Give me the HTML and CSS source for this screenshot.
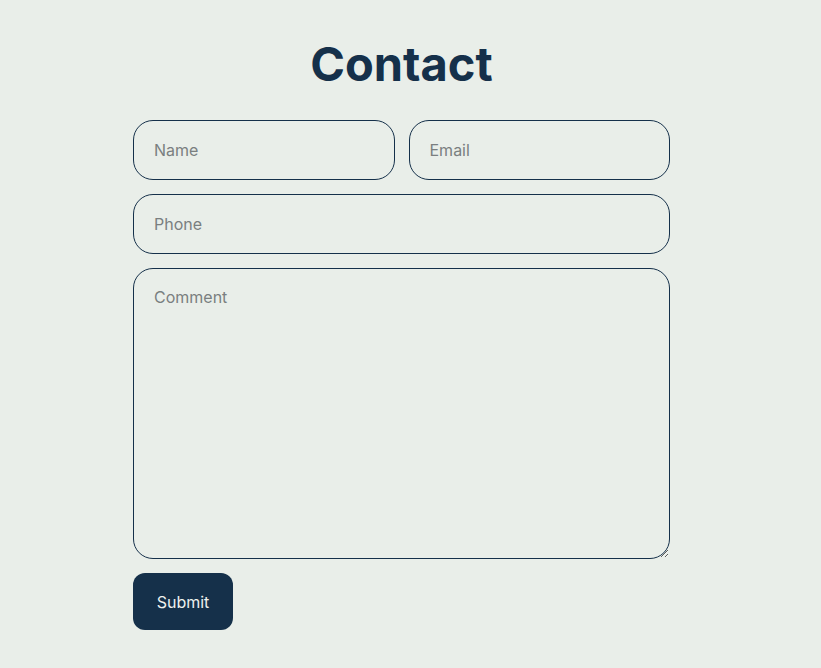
FILE: index.html
```html
<!DOCTYPE html>
<html lang="en">
<head>
<meta charset="utf-8">
<title>Contact</title>
<link rel="stylesheet" href="styles.css">
</head>
<body>
<main class="page">
  <h1 class="title">Contact</h1>
  <form class="form">
    <div class="row">
      <input class="field" type="text" placeholder="Name">
      <input class="field" type="email" placeholder="Email">
    </div>
    <input class="field" type="tel" placeholder="Phone">
    <textarea class="field area" placeholder="Comment"></textarea>
    <div>
      <button class="submit" type="button">Submit</button>
    </div>
  </form>
</main>
</body>
</html>
```
FILE: styles.css
```css
html, body {
  margin: 0;
  padding: 0;
  background: #e9eee9;
}
body {
  font-family: Inter, "Noto Sans", sans-serif;
  padding-right: 18px;
  height: 668px;
  box-sizing: border-box;
}
.page {
  width: 537px;
  margin: 0 auto;
  padding-top: 36px;
}
.title {
  margin: 0 0 28px;
  text-align: center;
  font-size: 47px;
  line-height: 56px;
  font-weight: 700;
  color: #15304a;
}
.form {
  display: flex;
  flex-direction: column;
  gap: 14px;
}
.row {
  display: flex;
  gap: 14px;
}
.row .field {
  flex: 1;
  min-width: 0;
}
.field {
  box-sizing: border-box;
  height: 60px;
  border: 1px solid #15304a;
  border-radius: 20px;
  background: transparent;
  padding: 0 20px 1px;
  font-family: Inter, "Noto Sans", sans-serif;
  font-size: 16px;
  color: #15304a;
  outline: none;
  width: 100%;
}
.field::placeholder {
  color: #7a7f80;
}
.area {
  height: 291px;
  padding: 18px 20px;
  resize: vertical;
  display: block;
}
.submit {
  width: 100px;
  height: 57px;
  border: none;
  border-radius: 12px;
  background: #15304a;
  color: #eef1ee;
  font-family: Inter, "Noto Sans", sans-serif;
  font-size: 16px;
  cursor: pointer;
}
```
